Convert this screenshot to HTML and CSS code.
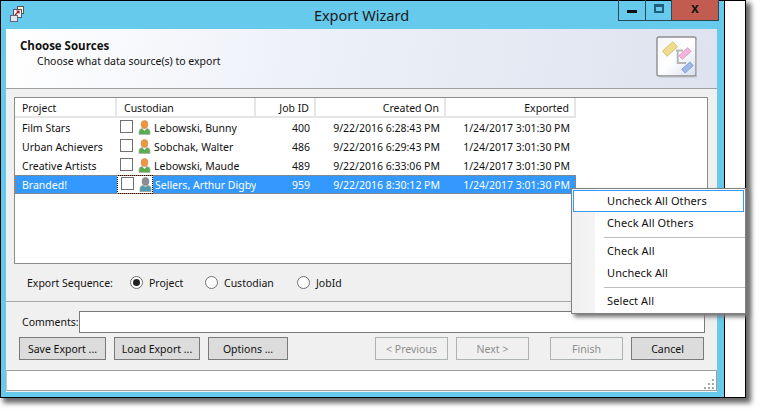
FILE: index.html
```html
<!DOCTYPE html>
<html lang="en">
<head>
<meta charset="utf-8">
<title>Export Wizard</title>
<link rel="stylesheet" href="styles.css">
</head>
<body>
<div class="frame">
  <div class="window">
    <div class="titlebar">
      <svg class="appicon" width="15" height="17" viewBox="0 0 15 17">
        <rect x="7.5" y="0.5" width="6" height="7" fill="#fff6c0" stroke="#556"/>
        <rect x="3.5" y="3.5" width="8" height="8" fill="#f4f4f4" stroke="#556"/>
        <rect x="0.5" y="9.5" width="7" height="6" fill="#dfe6f0" stroke="#667"/>
        <path d="M5 9 L9 5 M6.5 5 H9 V7.5" fill="none" stroke="#a02020" stroke-width="1.2"/>
      </svg>
      <span class="title">Export Wizard</span>
      <div class="caption">
        <div class="capbtn capmin"><span class="glyph-min"></span></div>
        <div class="capbtn capmax"><span class="glyph-max"></span></div>
        <div class="capbtn capclose">x</div>
      </div>
    </div>
    <div class="pane">
      <header class="head">
        <div>
          <div class="head-title">Choose Sources</div>
          <div class="head-sub">Choose what data source(s) to export</div>
        </div>
        <div class="wizicon">
          <svg width="42" height="42" viewBox="0 0 42 42">
            <defs>
              <linearGradient id="wg" x1="0" y1="0" x2="1" y2="1">
                <stop offset="0" stop-color="#f4f6fa"/><stop offset="0.5" stop-color="#ffffff"/><stop offset="1" stop-color="#d5dff0"/>
              </linearGradient>
            </defs>
            <rect x="1" y="1" width="39" height="39" rx="2" fill="url(#wg)" stroke="#8d8d8d" stroke-width="1.4"/>
            <path d="M40.5 4 V41 H4" fill="none" stroke="#bbb" stroke-width="1"/>
            <path d="M20 14.5 H27 M21.7 14.5 V27 H30" fill="none" stroke="#b5b5b5" stroke-width="2"/>
            <rect x="7" y="9.5" width="14" height="7" transform="rotate(-42 14 13)" fill="#efdc8d" stroke="#c9b860" stroke-width="0.7"/>
            <rect x="23" y="15" width="12" height="5" transform="rotate(-42 29 17.5)" fill="#f3b4dd" stroke="#d48abb" stroke-width="0.7"/>
            <rect x="26" y="29" width="11" height="5" transform="rotate(-42 31.5 31.5)" fill="#9db9ea" stroke="#6f8fca" stroke-width="0.7"/>
          </svg>
        </div>
      </header>
      <div class="list">
        <div class="row hdr">
          <div class="cell">Project</div>
          <div class="cell">Custodian</div>
          <div class="cell num">Job ID</div>
          <div class="cell num">Created On</div>
          <div class="cell num">Exported</div>
        </div>
        <div class="row">
          <div class="cell">Film Stars</div>
          <div class="cell cust"><span class="check"></span><svg class="person" viewBox="0 0 13 15"><path d="M1 14.5 V11.5 Q1 9 4 8.5 L6.5 10 L9 8.5 Q12 9 12 11.5 V14.5 Z" fill="#58ad4f" stroke="#b0b0b0" stroke-width=".8"/><path d="M5 9 L6.5 11 L8 9 Z" fill="#fff"/><ellipse cx="6.5" cy="4.5" rx="3.4" ry="4" fill="#f0963c" stroke="#c08a50" stroke-width=".6"/></svg><span>Lebowski, Bunny</span></div>
          <div class="cell num">400</div>
          <div class="cell num">9/22/2016 6:28:43 PM</div>
          <div class="cell num">1/24/2017 3:01:30 PM</div>
        </div>
        <div class="row">
          <div class="cell">Urban Achievers</div>
          <div class="cell cust"><span class="check"></span><svg class="person" viewBox="0 0 13 15"><path d="M1 14.5 V11.5 Q1 9 4 8.5 L6.5 10 L9 8.5 Q12 9 12 11.5 V14.5 Z" fill="#58ad4f" stroke="#b0b0b0" stroke-width=".8"/><path d="M5 9 L6.5 11 L8 9 Z" fill="#fff"/><ellipse cx="6.5" cy="4.5" rx="3.4" ry="4" fill="#f0963c" stroke="#c08a50" stroke-width=".6"/></svg><span>Sobchak, Walter</span></div>
          <div class="cell num">486</div>
          <div class="cell num">9/22/2016 6:29:43 PM</div>
          <div class="cell num">1/24/2017 3:01:30 PM</div>
        </div>
        <div class="row">
          <div class="cell">Creative Artists</div>
          <div class="cell cust"><span class="check"></span><svg class="person" viewBox="0 0 13 15"><path d="M1 14.5 V11.5 Q1 9 4 8.5 L6.5 10 L9 8.5 Q12 9 12 11.5 V14.5 Z" fill="#58ad4f" stroke="#b0b0b0" stroke-width=".8"/><path d="M5 9 L6.5 11 L8 9 Z" fill="#fff"/><ellipse cx="6.5" cy="4.5" rx="3.4" ry="4" fill="#f0963c" stroke="#c08a50" stroke-width=".6"/></svg><span>Lebowski, Maude</span></div>
          <div class="cell num">489</div>
          <div class="cell num">9/22/2016 6:33:06 PM</div>
          <div class="cell num">1/24/2017 3:01:30 PM</div>
        </div>
        <div class="row selected">
          <div class="cell">Branded!</div>
          <div class="cell cust"><span class="focusbox"><span class="check"></span><svg class="person" viewBox="0 0 13 15"><path d="M1 14.5 V11.5 Q1 9 4 8.5 L6.5 10 L9 8.5 Q12 9 12 11.5 V14.5 Z" fill="#4d9cae" stroke="#9a9a9a" stroke-width=".8"/><ellipse cx="6.5" cy="4.5" rx="3.4" ry="4" fill="#8b8f93" stroke="#777" stroke-width=".6"/></svg></span><span>Sellers, Arthur Digby</span></div>
          <div class="cell num">959</div>
          <div class="cell num">9/22/2016 8:30:12 PM</div>
          <div class="cell num">1/24/2017 3:01:30 PM</div>
        </div>
      </div>
      <div class="sequence">
        <span class="seq-label">Export Sequence:</span>
        <span class="opt opt-project"><span class="radio on"></span>Project</span>
        <span class="opt opt-custodian"><span class="radio"></span>Custodian</span>
        <span class="opt"><span class="radio"></span>JobId</span>
      </div>
      <div class="comments">
        <span class="comments-label">Comments:</span>
        <div class="input"></div>
      </div>
      <div class="buttons">
        <button class="btn w-save">Save Export ...</button>
        <button class="btn w-load">Load Export ...</button>
        <button class="btn w-opts">Options ...</button>
        <span class="spacer"></span>
        <button class="btn off">&lt; Previous</button>
        <button class="btn off">Next &gt;</button>
        <button class="btn off gap-left">Finish</button>
        <button class="btn">Cancel</button>
      </div>
      <div class="status">
        <svg class="grip" width="11" height="11" viewBox="0 0 11 11" fill="#a8a8a8">
          <rect x="8" y="1" width="2" height="2"/><rect x="4" y="5" width="2" height="2"/><rect x="8" y="5" width="2" height="2"/>
          <rect x="0" y="9" width="2" height="2"/><rect x="4" y="9" width="2" height="2"/><rect x="8" y="9" width="2" height="2"/>
        </svg>
      </div>
    </div>
  </div>
  <div class="side"></div>
  <div class="menu">
    <div class="item hot">Uncheck All Others</div>
    <div class="item">Check All Others</div>
    <div class="sep"></div>
    <div class="item">Check All</div>
    <div class="item">Uncheck All</div>
    <div class="sep"></div>
    <div class="item">Select All</div>
  </div>
</div>
</body>
</html>
```
FILE: styles.css
```css
* { box-sizing: border-box; }
html, body { margin: 0; padding: 0; background: #fff; }
body {
  width: 761px; height: 413px; overflow: hidden;
  font-family: "Noto Sans", "Open Sans", sans-serif;
  font-size: 10.5px; color: #111;
}
.frame {
  position: relative; display: flex;
  width: 746px; height: 398px;
  border: 1px solid #000;
  box-shadow: 4px 4px 5px 1px #666;
  background: #fff;
}
.window {
  width: 724px; display: flex; flex-direction: column;
  background: #66caec; border-right: 1px solid #000;
  padding: 0 7px 5px 5px;
}
.side { flex: 1; background: #fff; }
.titlebar { position: relative; height: 28px; flex: none; display: flex; align-items: center; justify-content: center; }
.appicon { position: absolute; left: 4px; top: 5px; }
.title { font-size: 14.5px; color: #1a1a1a; }
.caption {
  position: absolute; right: -2px; top: -1px; display: flex; height: 21px;
  border: 1px solid #2b4a58; border-top: 0;
}
.capbtn { display: flex; align-items: center; justify-content: center; }
.capmin { width: 27px; border-right: 1px solid #2b4a58; }
.capmax { width: 26px; border-right: 1px solid #2b4a58; }
.capclose { flex: 1; width: 46px; background: #c25b50; font: bold 14px/16px "Liberation Sans", sans-serif; color: #111; padding-bottom: 4px; }
.glyph-min { width: 10px; height: 3px; background: #111; margin-top: 3px; }
.glyph-max { width: 10px; height: 9px; border: 2px solid #1f5f7c; border-top-width: 3px; margin-bottom: 3px; }
.pane { flex: 1; display: flex; flex-direction: column; background: #f0f0f0; }
.head {
  height: 60px; flex: none; display: flex; justify-content: space-between;
  padding: 9px 19px 0 14px;
  background: linear-gradient(100deg, #ffffff 0%, #eef1f8 40%, #dde3ef 100%);
  border-bottom: 1px solid #a0a0a0;
}
.head-title { font-family: "Open Sans", sans-serif; font-weight: 700; font-size: 11.5px; line-height: 15px; color: #111; }
.head-sub { margin-left: 17px; margin-top: 1px; line-height: 15px; }
.wizicon { margin-top: -2px; height: 42px; }
.list {
  flex: none; height: 167px; margin: 8px 9px 0 8px;
  background: #fff; border: 1px solid #8c8c8c; padding-bottom: 1px;
}
.row { display: grid; grid-template-columns: 102px 139px 60px 130px 130px; height: 19px; width: 561px; align-items: center; }
.hdr { height: 20px; }
.hdr .cell { height: 20px; line-height: 21px; padding-right: 5px; background: #fff; border-right: 2px solid #e6e6e6; border-bottom: 2px solid #e6e6e6; }
.cell { height: 19px; padding: 0 7px 0 7px; line-height: 20px; white-space: nowrap; overflow: hidden; }
.num { text-align: right; padding-right: 6px; }
.cust { display: flex; align-items: center; padding: 0 0 0 3px; }
.check { width: 13px; height: 13px; border: 1px solid #707070; background: #fff; flex: none; margin: -2px 5px 0 0; }
.person { width: 13px; height: 15px; margin: -1px 3px 0 0; flex: none; }
.selected { background: #3399ff; color: #fff; outline: 1px dotted #c77a2a; outline-offset: -1px; }
.selected .cust { padding-left: 0; }
.focusbox {
  display: flex; align-items: center; height: 19px; width: 36px; flex: none;
  padding-left: 3px; background: #fff; border: 1px dotted #000; margin-right: 2px;
}
.focusbox .person { margin-right: 0; }
.sequence { height: 38px; flex: none; display: flex; align-items: center; padding-left: 21px; border-bottom: 1px solid #a8a8a8; }
.seq-label { width: 103px; }
.opt { display: flex; align-items: center; }
.opt-project { width: 75px; }
.opt-custodian { width: 92px; }
.radio { width: 13px; height: 13px; border-radius: 50%; border: 1px solid #707070; background: #fff; margin-right: 6px; flex: none; position: relative; }
.radio.on::after { content: ""; position: absolute; left: 2px; top: 2px; width: 7px; height: 7px; border-radius: 50%; background: #222; }
.comments { flex: none; display: flex; align-items: center; margin-top: 9px; height: 22px; padding-left: 16px; padding-right: 12px; }
.comments-label { width: 57px; }
.input { flex: 1; height: 22px; background: #fff; border: 1px solid #7a7a7a; }
.buttons { flex: none; display: flex; height: 23px; margin-top: 4px; padding: 0 13px; gap: 8px; }
.btn {
  width: 73px; height: 23px; padding: 0; font: inherit; color: #111;
  background: #dcdcdc; border: 1px solid #7a7a7a; border-radius: 0;
}
.w-save { width: 87px; }
.w-load { width: 86px; }
.w-opts { width: 80px; }
.spacer { flex: 1; }
.off { background: #f0f0f0; border-color: #adb2b5; color: #8e8e8e; }
.gap-left { margin-left: 13px; }
.status {
  flex: none; position: relative; height: 21px; margin-top: 10px;
  background: #fff; border-top: 1px solid #a0a0a0; border-bottom: 1px solid #a0a0a0; border-right: 1px solid #a0a0a0; border-left: 1px solid #c8c8c8;
}
.grip { position: absolute; right: 1px; bottom: 1px; }
.menu {
  position: absolute; left: 570px; top: 187px; width: 175px; height: 126px;
  padding: 1px 1px 0 1px;
  background: linear-gradient(90deg, #f0f0f0 0, #f4f4f4 23px, #fff 23px);
  border: 1px solid #7f7f7f;
  box-shadow: 3px 3px 4px #777;
  font-size: 11px;
}
.item { height: 22px; line-height: 20px; padding-left: 33px; letter-spacing: .1px; border: 1px solid transparent; }
.hot { background: #fff; border-color: #3399ff; }
.sep { height: 6px; margin-left: 31px; margin-right: -1px; background: linear-gradient(#bdbdbd, #bdbdbd) center / 100% 1px no-repeat; }
```
